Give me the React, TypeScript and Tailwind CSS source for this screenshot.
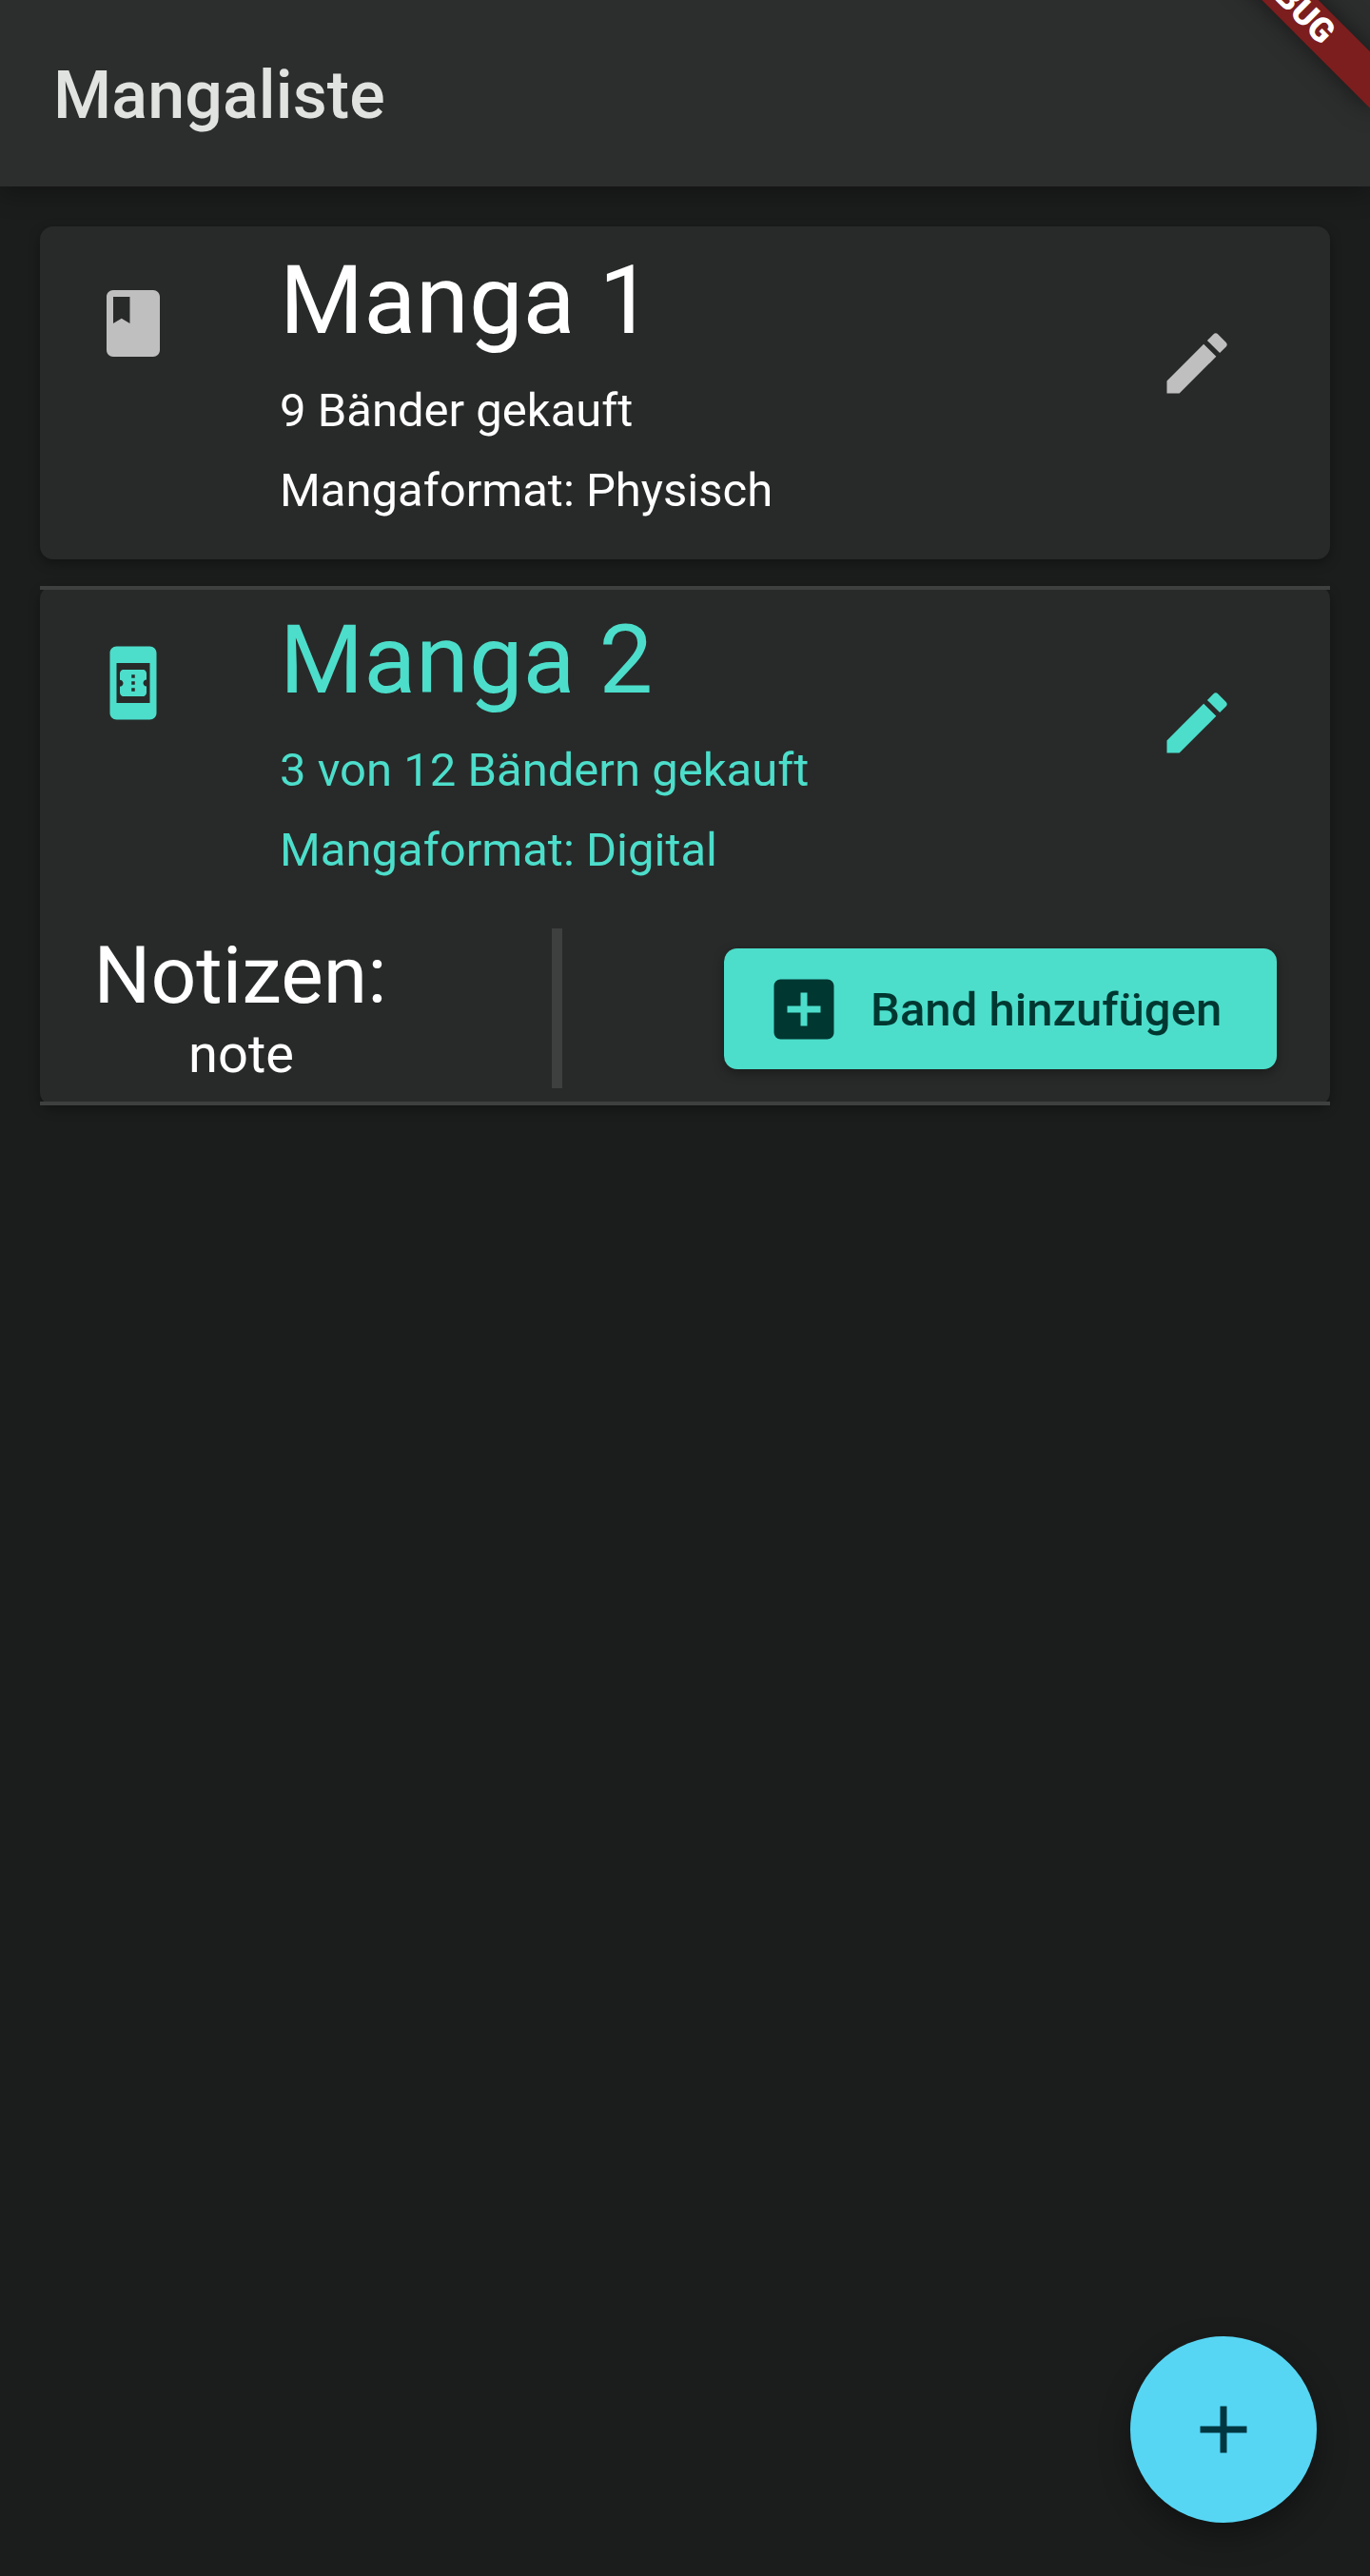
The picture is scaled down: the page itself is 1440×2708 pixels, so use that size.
import React from "react";
import { MdAdd, MdAddBox, MdBook, MdBookOnline, MdEdit } from "react-icons/md";

type TileProps = {
  icon: React.ReactNode;
  title: string;
  volumes: string;
  format: string;
  tone: string;
  iconTone: string;
};

function MangaTile({ icon, title, volumes, format, tone, iconTone }: TileProps) {
  return (
    <div className={`flex h-[350px] items-start pt-[20px] pl-14 ${tone}`}>
      <div className={`mt-[40px] w-[196px] shrink-0 ${iconTone}`}>{icon}</div>
      <div className="grow whitespace-nowrap">
        <h2 className="text-[101px] leading-[115px] font-normal">{title}</h2>
        <div className="mt-[17px] text-[49px] leading-[84px]">
          <p>{volumes}</p>
          <p>{format}</p>
        </div>
      </div>
      <button aria-label="Bearbeiten" className={`mt-[82px] mr-[98px] shrink-0 ${iconTone}`}>
        <MdEdit size={84} />
      </button>
    </div>
  );
}

export default function App() {
  return (
    <div className="relative flex h-[2708px] w-[1440px] flex-col overflow-hidden bg-[#1b1d1c] font-[Roboto,sans-serif] text-white">
      <header className="flex h-[196px] shrink-0 items-center bg-[#2c2e2d] px-14 pt-1 shadow-[0_8px_24px_rgba(0,0,0,0.3)]">
        <h1 className="text-[70px] leading-none font-medium tracking-[0.1px] text-[#e1e3e1]">Mangaliste</h1>
      </header>

      <main className="flex flex-col gap-7 px-[42px] pt-[42px]">
        <section className="rounded-[14px] bg-[#282a29] shadow-[0_4px_12px_rgba(0,0,0,0.35)]">
          <MangaTile
            icon={<MdBook size={84} />}
            title="Manga 1"
            volumes="9 Bänder gekauft"
            format="Mangaformat: Physisch"
            tone="text-white"
            iconTone="text-[#bfbfbf]"
          />
        </section>

        <section className="relative h-[546px] rounded-[14px] bg-[#282a29] shadow-[0_4px_12px_rgba(0,0,0,0.35)]">
          <div className="absolute inset-x-0 top-0 h-[4px] bg-[#3d403f]" />
          <div className="absolute inset-x-0 bottom-0 h-[4px] bg-[#3d403f]" />
          <MangaTile
            icon={<MdBookOnline size={84} />}
            title="Manga 2"
            volumes="3 von 12 Bändern gekauft"
            format="Mangaformat: Digital"
            tone="text-[#4cdecb]"
            iconTone="text-[#4cdecb]"
          />
          <div className="flex pt-[10px] pr-14 pl-14">
            <div className="flex w-[309px] flex-col items-center pt-px">
              <h3 className="text-[84px] leading-[98px] font-normal">Notizen:</h3>
              <p className="pl-[2px] text-[56px] leading-[67px]">note</p>
            </div>
            <div className="ml-[173px] h-[168px] w-[10.5px] bg-[#3d403f]" />
            <button className="mt-[21px] ml-auto flex h-[127px] w-[581px] items-center gap-7 rounded-[14px] bg-[#4cdecb] pl-[42px] text-[49px] font-medium whitespace-nowrap text-[#003731] shadow-[0_4px_12px_rgba(0,0,0,0.35)]">
              <MdAddBox size={84} className="shrink-0" />
              <span className="pt-[2px]">Band hinzufügen</span>
            </button>
          </div>
        </section>
      </main>

      <button
        aria-label="Manga hinzufügen"
        className="absolute right-14 bottom-14 flex size-[196px] items-center justify-center rounded-full bg-[#57d6f4] text-[#003640] shadow-[0_14px_32px_rgba(0,0,0,0.35)]"
      >
        <MdAdd size={84} />
      </button>

      <div className="absolute top-[-21px] left-[1216px] flex h-[42px] w-[280px] rotate-45 items-center justify-center bg-[#7c1d1e] text-[35.7px] leading-none font-black shadow-[0_0_26px_rgba(0,0,0,0.5)]">
        DEBUG
      </div>
    </div>
  );
}
